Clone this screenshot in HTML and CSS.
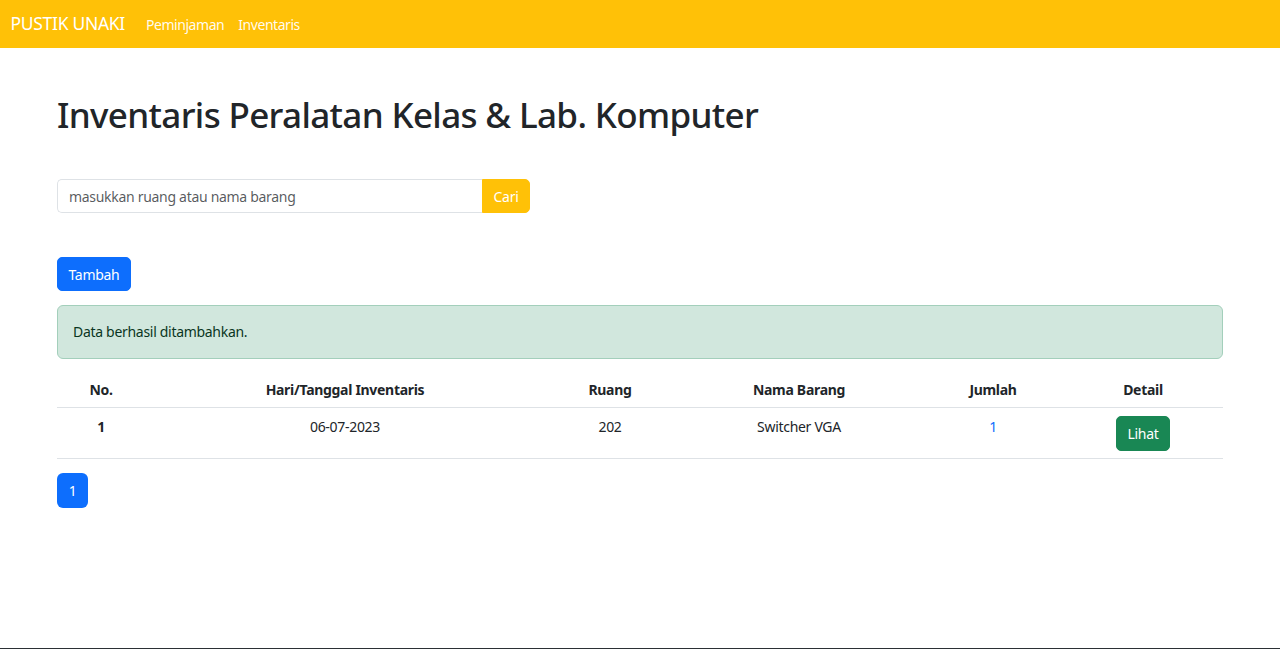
FILE: index.html
```html
<!DOCTYPE html>
<html lang="id">
<head>
<meta charset="utf-8">
<title>Inventaris</title>
<link rel="stylesheet" href="styles.css">
</head>
<body>
<nav class="navbar">
  <a class="brand" href="#">PUSTIK UNAKI</a>
  <a class="nav-link" href="#">Peminjaman</a>
  <a class="nav-link" href="#">Inventaris</a>
</nav>
<main class="content">
  <h1 class="title">Inventaris Peralatan Kelas &amp; Lab. Komputer</h1>
  <form class="search">
    <input class="search-input" type="text" placeholder="masukkan ruang atau nama barang">
    <button class="btn btn-warning search-btn" type="button">Cari</button>
  </form>
  <div class="actions">
    <button class="btn btn-primary" type="button">Tambah</button>
  </div>
  <div class="alert">Data berhasil ditambahkan.</div>
  <table class="table">
    <thead>
      <tr>
        <th class="c-no">No.</th>
        <th class="c-date">Hari/Tanggal Inventaris</th>
        <th class="c-room">Ruang</th>
        <th class="c-name">Nama Barang</th>
        <th class="c-qty">Jumlah</th>
        <th class="c-detail">Detail</th>
      </tr>
    </thead>
    <tbody>
      <tr>
        <td class="num">1</td>
        <td>06-07-2023</td>
        <td>202</td>
        <td>Switcher VGA</td>
        <td><a class="qty" href="#">1</a></td>
        <td><button class="btn btn-success" type="button">Lihat</button></td>
      </tr>
    </tbody>
  </table>
  <div class="pagination">
    <a class="page-link active" href="#">1</a>
  </div>
</main>
<footer class="footer"></footer>
</body>
</html>
```
FILE: styles.css
```css
* { box-sizing: border-box; }
html, body { margin: 0; padding: 0; }
body {
  font-family: "Segoe UI", "Noto Sans", "Open Sans", sans-serif;
  font-size: 14px;
  line-height: 1.5;
  letter-spacing: -0.3px;
  color: #212529;
  background: #fff;
}
a { text-decoration: none; }

.navbar {
  height: 48px;
  background: #ffc107;
  display: flex;
  align-items: center;
  padding: 0 10.5px;
}
.brand {
  color: #fff;
  font-size: 17.5px;
  margin-right: 14px;
  line-height: 1;
  letter-spacing: -0.3px;
}
.nav-link {
  color: rgba(255,255,255,0.95);
  font-size: 14px;
  padding: 0 7px;
  letter-spacing: -0.45px;
}

.content {
  min-height: 600px;
  padding: 0 57px 20px;
}
.title {
  margin: 0;
  padding-top: 46px;
  font-size: 35px;
  font-weight: 500;
  line-height: 42px;
  letter-spacing: -0.65px;
}
.search {
  display: flex;
  width: 473px;
  margin-top: 43px;
  height: 34px;
}
.search-input {
  flex: 1;
  min-width: 0;
  border: 1px solid #dee2e6;
  border-right: none;
  border-radius: 5px 0 0 5px;
  padding: 0 11px;
  font: inherit;
  letter-spacing: -0.3px;
  color: #212529;
  outline: none;
}
.search-input::placeholder { color: rgba(33,37,41,0.75); }

.btn {
  font: inherit;
  letter-spacing: -0.3px;
  border: 1px solid transparent;
  border-radius: 5px;
  color: #fff;
  padding: 0 10.5px;
  height: 34px;
  cursor: pointer;
}
.btn-warning { background: #ffc107; border-color: #ffc107; }
.search-btn { width: 48px; border-radius: 0 5px 5px 0; padding: 0; }
.btn-primary { background: #0d6efd; border-color: #0d6efd; }
.btn-success { background: #198754; border-color: #198754; height: 35px; }

.actions { margin-top: 44px; }

.alert {
  margin-top: 14px;
  background: #d1e7dd;
  border: 1px solid #a3cfbb;
  color: #0a3622;
  border-radius: 6px;
  padding: 15px 15px 16px;
  line-height: 21px;
}

.table {
  margin-top: 13px;
  width: 100%;
  border-collapse: collapse;
  table-layout: fixed;
}
.table th, .table td {
  text-align: center;
  vertical-align: top;
  padding: 7px;
  border-bottom: 1px solid #dee2e6;
  line-height: 21px;
}
.table th { font-weight: 700; }
.table td { padding-top: 8px; }
.table td.num { font-weight: 700; }
.c-no { width: 88px; }
.c-date { width: 400px; }
.c-room { width: 130px; }
.c-name { width: 248px; }
.c-qty { width: 140px; }
.c-detail { width: 160px; }
.qty { color: #0d6efd; }

.pagination {
  margin-top: 14px;
  display: flex;
}
.page-link {
  width: 31px;
  height: 35px;
  display: flex;
  align-items: center;
  justify-content: center;
  border-radius: 6px;
}
.page-link.active { background: #0d6efd; color: #fff; }

.footer {
  height: 40px;
  background: #2b3035;
}
```
